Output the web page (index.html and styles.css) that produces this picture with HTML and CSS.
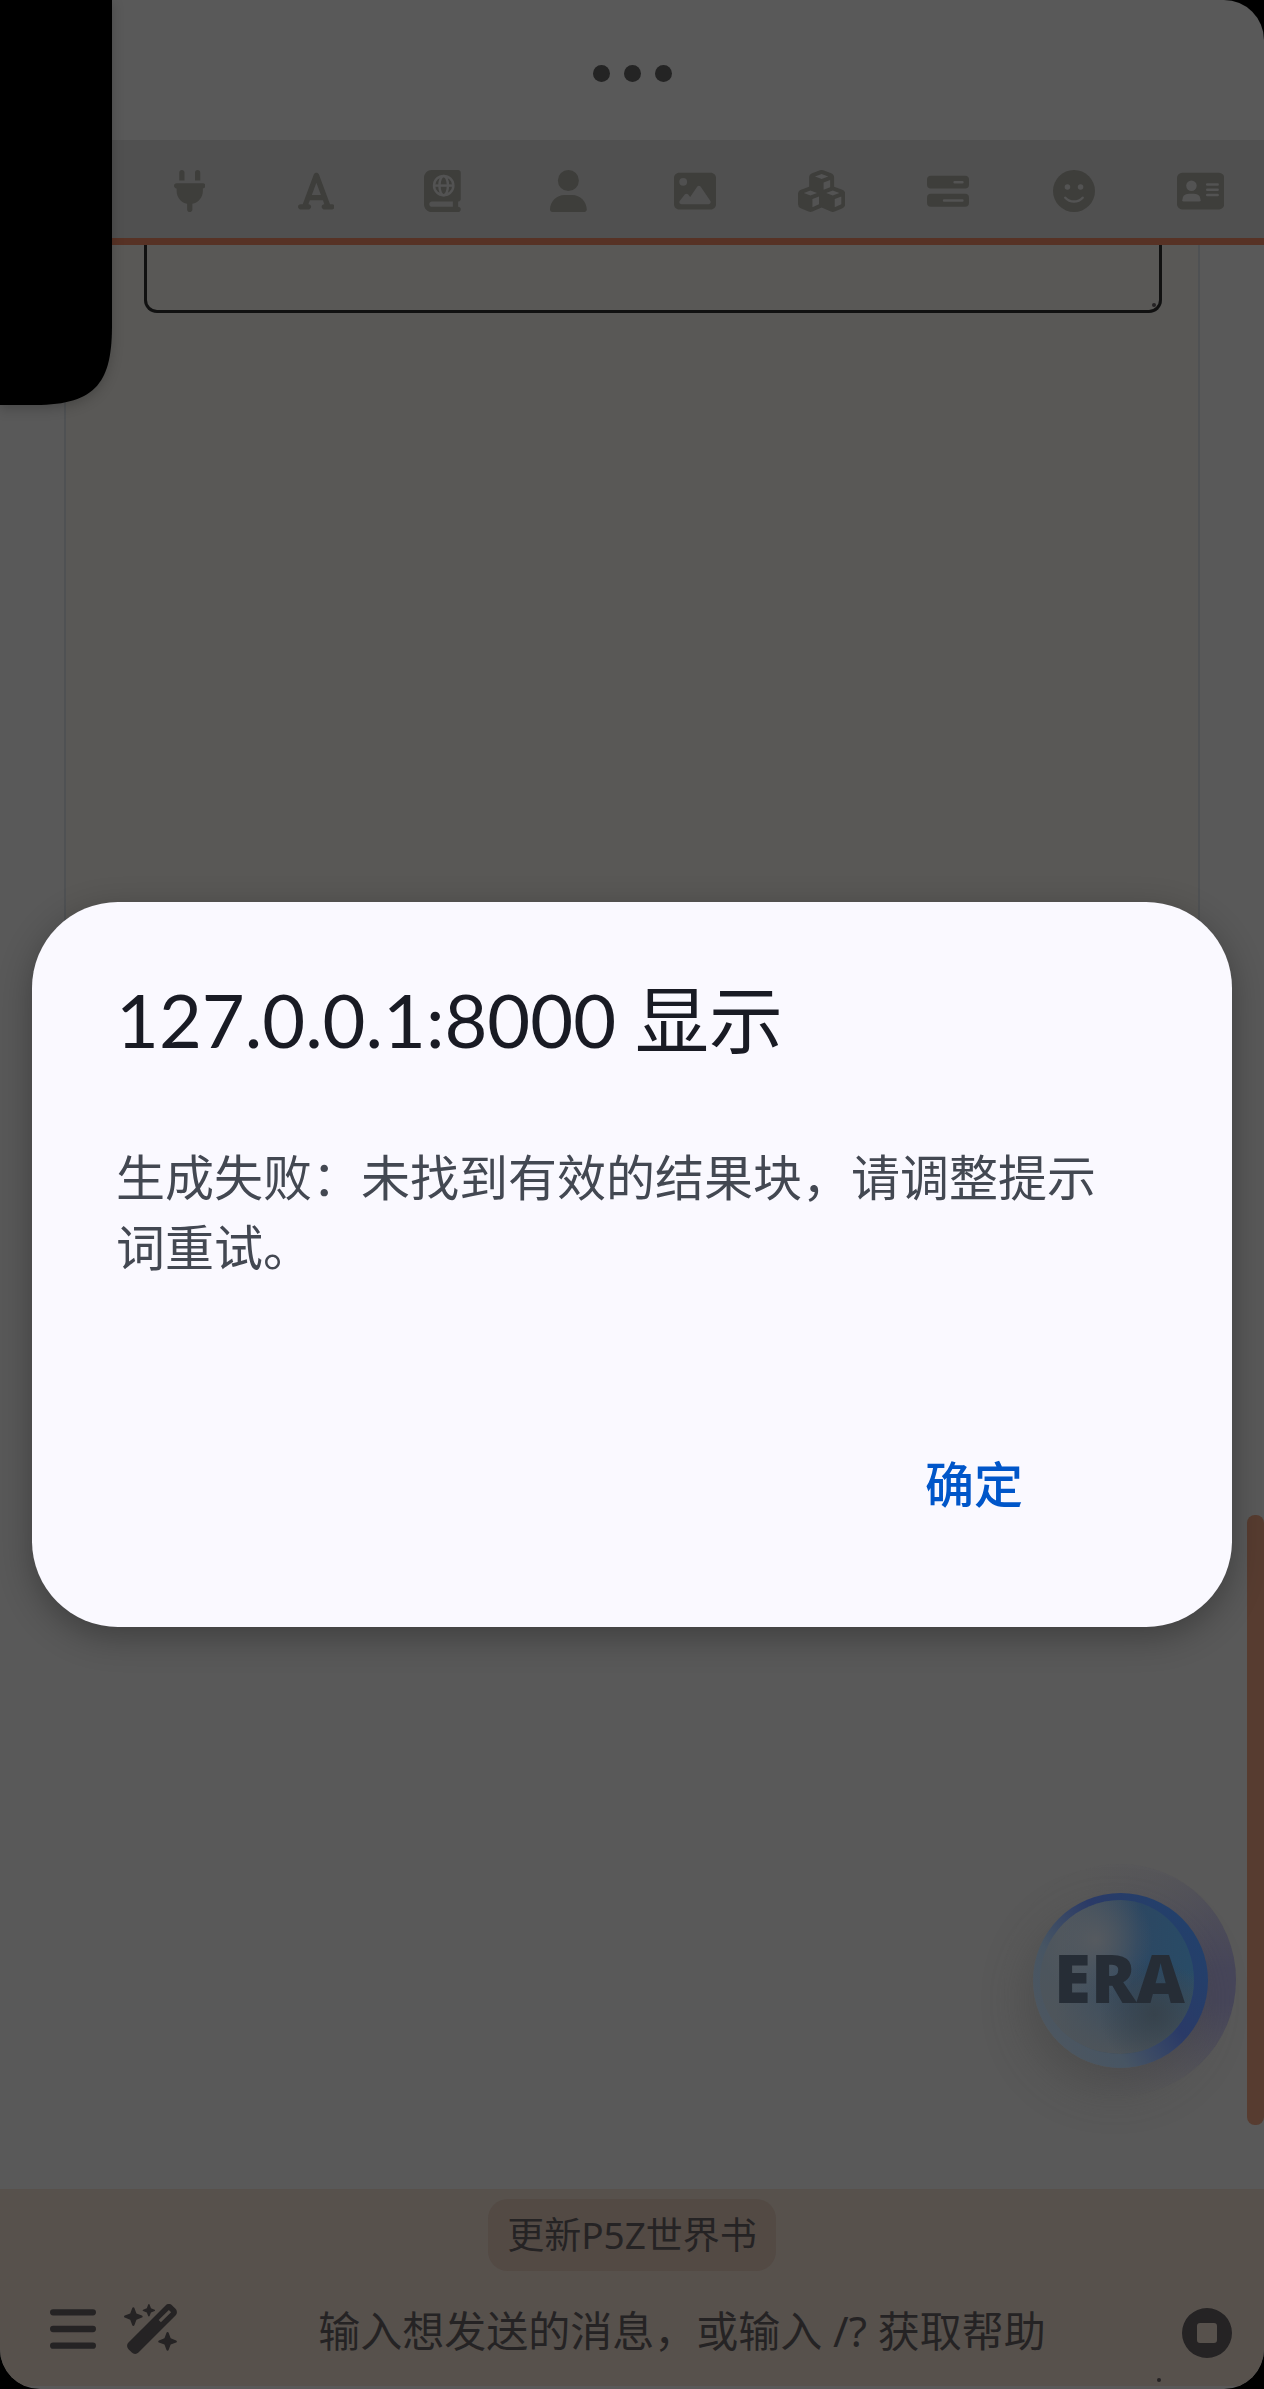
FILE: index.html
```html
<!DOCTYPE html>
<html lang="zh-CN">
<head>
  <meta charset="UTF-8" />
  <meta name="viewport" content="width=device-width, initial-scale=1.0" />
  <title>127.0.0.1:8000</title>
  <link rel="stylesheet" href="styles.css">
</head>
<body>
  <div class="screen">
    <header class="window-bar">
      <span class="dot"></span>
      <span class="dot"></span>
      <span class="dot"></span>
    </header>

    <nav class="top-bar">
      <button type="button" aria-label="AI 设置"></button>
      <button type="button" aria-label="API 连接">
        <svg viewBox="0 0 384 512"><path d="M96 0C78.300 0 64 14.300 64 32v96h64V32c0-17.700-14.300-32-32-32zM288 0c-17.700 0-32 14.300-32 32v96h64V32c0-17.700-14.300-32-32-32zM32 160c-17.700 0-32 14.300-32 32s14.300 32 32 32v32c0 77.400 55 142 128 156.800V480c0 17.700 14.300 32 32 32s32-14.300 32-32V412.800C297 398 352 333.400 352 256V224c17.700 0 32-14.300 32-32s-14.300-32-32-32H32z"/></svg>
      </button>
      <button type="button" aria-label="格式">
        <svg viewBox="0 0 448 512"><path d="M254 52.800C249.300 40.300 237.300 32 224 32s-25.300 8.300-30 20.800L57.800 416H32c-17.700 0-32 14.300-32 32s14.300 32 32 32h96c17.700 0 32-14.300 32-32s-14.300-32-32-32h-1.800l18-48H303.800l18 48H320c-17.700 0-32 14.300-32 32s14.300 32 32 32h96c17.700 0 32-14.300 32-32s-14.300-32-32-32H390.200L254 52.800zM279.800 304H168.200L224 155.100 279.800 304z"/></svg>
      </button>
      <button type="button" aria-label="世界书">
        <svg viewBox="0 0 448 512">
          <path fill-rule="evenodd" d="M0 96C0 43 43 0 96 0H416c17.700 0 32 14.300 32 32V352c0 17.700-14.300 32-32 32v64c17.700 0 32 14.300 32 32s-14.300 32-32 32H96c-53 0-96-43-96-96V96zM64 416c0 17.700 14.300 32 32 32H352V384H96c-17.700 0-32 14.300-32 32z"/>
          <g class="cut-line"><circle cx="240" cy="190" r="118"/><ellipse cx="240" cy="190" rx="52" ry="118"/><path d="M122 190H358"/></g>
        </svg>
      </button>
      <button type="button" aria-label="用户">
        <svg viewBox="0 0 448 512"><path d="M224 256A128 128 0 1 0 224 0a128 128 0 1 0 0 256zm-45.700 48C79.800 304 0 383.800 0 482.300C0 498.700 13.300 512 29.700 512H418.300c16.400 0 29.700-13.300 29.700-29.700C448 383.800 368.200 304 269.700 304H178.300z"/></svg>
      </button>
      <button type="button" aria-label="背景">
        <svg viewBox="0 0 512 512"><path fill-rule="evenodd" d="M0 96C0 60.700 28.700 32 64 32H448c35.300 0 64 28.700 64 64V416c0 35.300-28.700 64-64 64H64c-35.300 0-64-28.700-64-64V96zM323.800 202.500c-4.500-6.600-11.900-10.500-19.800-10.500s-15.400 3.900-19.800 10.500l-87 127.600L170.700 297c-4.600-5.700-11.500-9-18.700-9s-14.200 3.300-18.700 9l-64 80c-5.800 7.200-6.900 17.100-2.900 25.400s12.400 13.600 21.600 13.600H424c8.900 0 17.100-4.900 21.200-12.800s3.600-17.400-1.400-24.700l-120-176zM112 192a48 48 0 1 0 0-96 48 48 0 1 0 0 96z"/></svg>
      </button>
      <button type="button" aria-label="扩展">
        <svg viewBox="0 0 576 512">
          <path d="M268 4q20-8 40 0l96 36q36 14 36 52v113l100 37q36 14 36 53v119q0 36-33 51l-96 42q-23 10-46 0L288 457 175 507q-23 10-46 0l-96-42Q0 450 0 414V295q0-39 36-53l100-37V92q0-38 36-52z"/>
          <path class="cut" d="M288 48l81 30-81 32-81-32zM152 250l81 30-81 32-81-32zM424 250l81 30-81 32-81-32zM312 152l80-31v90l-80 30zM176 355l80-32v96l-80 36zM448 355l80-32v96l-80 36z"/>
        </svg>
      </button>
      <button type="button" aria-label="预设">
        <svg viewBox="0 0 512 512">
          <rect y="69" width="512" height="156" rx="48"/><rect y="291" width="512" height="156" rx="48"/>
          <path class="cut-line" stroke-linecap="round" d="M336 150H432M208 371H432"/>
        </svg>
      </button>
      <button type="button" aria-label="表情">
        <svg viewBox="0 0 512 512">
          <circle cx="256" cy="256" r="256"/>
          <g class="cut"><circle cx="176" cy="208" r="34"/><circle cx="336" cy="208" r="34"/></g>
          <path class="cut-line" stroke-linecap="round" d="M150 338q42 46 106 46t106-46"/>
        </svg>
      </button>
      <button type="button" aria-label="角色">
        <svg viewBox="0 0 576 512">
          <rect y="32" width="576" height="448" rx="64"/>
          <g class="cut"><circle cx="176" cy="192" r="64"/><path d="M64 368q0-80 80-80h64q80 0 80 80 0 16-16 16H80q-16 0-16-16z"/></g>
          <path class="cut-line" stroke-linecap="round" d="M368 176H496M368 240H496M368 304H496"/>
        </svg>
      </button>
    </nav>

    <main class="chat">
      <div class="card">
        <div class="card-field">
          <textarea class="card-text" aria-label="提示词"></textarea>
          <span class="grip"></span>
        </div>
      </div>
    </main>

    <form class="send-form">
      <button type="button" class="quick-reply">更新P5Z世界书</button>
      <div class="send-row">
        <div class="left-tools">
          <button type="button" class="menu" aria-label="菜单">
            <svg viewBox="0 0 44 42"><path class="menu-lines" d="M3 5H41M3 21H41M3 37H41"/></svg>
          </button>
          <button type="button" class="wand" aria-label="扩展工具">
            <svg viewBox="0 0 576 512">
              <path d="M234.700 42.700L197 56.800c-3 1.100-5 4-5 7.200s2 6.100 5 7.200l37.700 14.100L248.800 123c1.100 3 4 5 7.200 5s6.100-2 7.200-5l14.100-37.700L315 71.200c3-1.100 5-4 5-7.200s-2-6.100-5-7.200L277.300 42.700 263.200 5c-1.100-3-4-5-7.200-5s-6.100 2-7.200 5L234.700 42.700zM46.100 395.400c-18.700 18.700-18.700 49.100 0 67.900l34.600 34.600c18.700 18.700 49.100 18.700 67.900 0L529.900 116.500c18.700-18.700 18.700-49.100 0-67.900L495.300 14.100c-18.700-18.700-49.100-18.700-67.900 0L46.100 395.400zM484.600 82.600l-105 105-23.300-23.300 105-105 23.300 23.300zM7.500 117.200C3 118.900 0 123.200 0 128s3 9.100 7.500 10.800L64 160l21.200 56.500c1.700 4.500 6 7.500 10.800 7.500s9.100-3 10.800-7.500L128 160l56.500-21.200c4.500-1.700 7.500-6 7.500-10.800s-3-9.100-7.500-10.800L128 96 106.800 39.500C105.100 35 100.800 32 96 32s-9.100 3-10.800 7.500L64 96 7.500 117.200zm352 256c-4.500 1.700-7.500 6-7.500 10.800s3 9.100 7.500 10.800L416 416l21.200 56.500c1.700 4.500 6 7.500 10.800 7.500s9.100-3 10.800-7.500L480 416l56.500-21.200c4.500-1.700 7.500-6 7.500-10.800s-3-9.100-7.500-10.800L480 352l-21.200-56.500c-1.700-4.500-6-7.500-10.800-7.500s-9.100 3-10.800 7.500L416 352l-56.500 21.200z"/>
            </svg>
          </button>
        </div>
        <div class="message-box">
          <textarea class="message" rows="1" aria-label="消息" placeholder="输入想发送的消息，或输入 /? 获取帮助"></textarea>
          <span class="grip"></span>
        </div>
        <button type="button" class="stop" aria-label="停止">
          <svg viewBox="0 0 50 50"><path fill-rule="evenodd" d="M25 0a25 25 0 1 0 0 50 25 25 0 1 0 0-50zM18 15H32q3 0 3 3V32q0 3-3 3H18q-3 0-3-3V18q0-3 3-3z"/></svg>
        </button>
      </div>
    </form>
  </div>

  <div class="scroll-thumb"></div>
  <div class="era-halo">
    <button type="button" class="era-ball">ERA</button>
  </div>
  <svg class="camera-cutout" viewBox="0 0 112 405"><path d="M0 0H112V325C112 380 98 405 35 405H0z"/></svg>

  <div class="overlay">
    <div class="alert" role="alertdialog" aria-labelledby="alertTitle" aria-describedby="alertText">
      <h1 id="alertTitle">127.0.0.1:8000 显示</h1>
      <p id="alertText">生成失败：未找到有效的结果块，请调整提示词重试。</p>
      <div class="alert-actions">
        <button type="button">确定</button>
      </div>
    </div>
  </div>
</body>
</html>
```

FILE: styles.css
```css
* {
  box-sizing: border-box;
}
body {
  margin: 0;
  background: #000;
  font-family: "Noto Sans", "Noto Sans CJK SC", sans-serif;
}
button {
  padding: 0;
  border: none;
  background: none;
  color: inherit;
  font: inherit;
  cursor: pointer;
}
textarea {
  display: block;
  resize: none;
  background: transparent;
  font: inherit;
}
svg {
  display: block;
  fill: currentColor;
}
.screen {
  display: flex;
  flex-direction: column;
  min-height: 100vh;
  padding-bottom: 3px;
  border-radius: 40px;
  overflow: hidden;
  background: #595959;
}

/* header */
.window-bar {
  display: flex;
  justify-content: center;
  gap: 14px;
  height: 140px;
  padding-top: 65px;
}
.dot {
  width: 17px;
  height: 17px;
  border-radius: 50%;
  background: #242424;
}
.top-bar {
  display: flex;
  height: 105px;
  padding-top: 3px;
  background: #505050;
  border-bottom: 7px solid #573225;
  color: #3e3e3b;
}
.top-bar button {
  flex: 1;
  display: flex;
  justify-content: center;
  align-items: center;
}
.top-bar svg {
  height: 42px;
}
.cut {
  fill: #535353;
}
.cut-line {
  fill: none;
  stroke: #535353;
  stroke-width: 30px;
}

/* chat */
.chat {
  flex: 1;
  padding: 0 64px;
}
.card {
  height: 1040px;
  padding: 0 36px 0 78px;
  border: 2px solid #4f5153;
  border-top: none;
  background: #595856;
}
.card-field {
  position: relative;
}
.card-text {
  width: 100%;
  height: 68px;
  border: 3px solid #111;
  border-top: none;
  border-radius: 0 0 13px 13px;
}
.grip {
  position: absolute;
  right: 6px;
  bottom: 6px;
  width: 4px;
  height: 4px;
  border-radius: 50%;
  background: #252324;
}

/* send form */
.send-form {
  display: flex;
  flex-direction: column;
  align-items: center;
  gap: 28px;
  padding: 10px 0 19px;
  background: #57514c;
  color: #252324;
}
.quick-reply {
  padding: 10px 19px;
  border-radius: 20px;
  background: #534a44;
  font-size: 37px;
  line-height: 52px;
}
.send-row {
  display: flex;
  align-items: center;
  width: 100%;
  padding: 0 32px 0 50px;
}
.left-tools {
  display: flex;
  align-items: center;
  gap: 28px;
  padding-bottom: 8px;
}
.menu svg {
  width: 46px;
  height: 44px;
}
.menu-lines {
  stroke: currentColor;
  stroke-width: 6px;
  stroke-linecap: round;
}
.wand svg {
  width: 56px;
  height: 50px;
}
.stop svg {
  width: 50px;
  height: 50px;
}
.message-box {
  position: relative;
  flex: 1;
  padding: 0 22px 0 24px;
}
.message-box .grip {
  right: 21px;
  bottom: -15px;
}
.message {
  width: 100%;
  height: 68px;
  padding: 0;
  border: none;
  font-size: 42px;
  line-height: 64px;
  text-align: center;
  overflow: hidden;
}
.message::placeholder {
  color: #252324;
  opacity: 1;
}

/* things floating over the page */
.scroll-thumb {
  position: fixed;
  top: 1515px;
  right: 0;
  width: 17px;
  height: 610px;
  border-radius: 8px;
  background: #573c30;
}
.era-halo {
  position: fixed;
  right: 28px;
  bottom: 293px;
  display: flex;
  justify-content: center;
  align-items: center;
  width: 232px;
  height: 232px;
  border-radius: 50%;
  background:
    linear-gradient(rgba(89, 89, 89, 0.8), rgba(89, 89, 89, 0) 45%, rgba(89, 89, 89, 0) 60%, rgba(89, 89, 89, 0.9)),
    linear-gradient(90deg, #595959 35%, #47465a 90%);
}
/* the border is the blue rim, the padding box is the glass inside it */
.era-ball {
  width: 175px;
  height: 175px;
  padding-left: 6px;
  border: solid transparent;
  border-width: 7px 14px 14px 7px;
  border-radius: 50%;
  background:
    radial-gradient(circle at 36% 26%, rgba(88, 91, 95, 0.9) 0%, rgba(88, 91, 95, 0) 38%) padding-box,
    radial-gradient(circle at 74% 74%, rgba(54, 65, 74, 0.9) 0%, rgba(54, 65, 74, 0) 34%) padding-box,
    linear-gradient(rgba(80, 85, 89, 0) 45%, rgba(80, 85, 89, 0.9) 100%) padding-box,
    linear-gradient(95deg, #4c555d 15%, #2c4762 60%, #284c67 100%) padding-box,
    linear-gradient(235deg, #23406b 15%, #2a3a67 42%, #475563 68%, #50575e 100%) border-box;
  box-shadow: -6px 20px 44px rgba(60, 60, 60, 0.4);
  color: #262d36;
  font-size: 67px;
  font-weight: 900;
  line-height: 146px;
}
.camera-cutout {
  position: fixed;
  top: 0;
  left: 0;
  width: 112px;
  height: 405px;
  fill: #000;
  overflow: visible;
  filter: drop-shadow(0 4px 6px rgba(0, 0, 0, 0.2));
}

/* alert */
.overlay {
  position: fixed;
  inset: 140px 0 0;
  display: flex;
  align-items: center;
  padding: 0 32px;
}
.alert {
  flex: 1;
  padding: 72px 88px 110px 84px;
  border-radius: 86px;
  background: #faf9ff;
  box-shadow: 0 10px 34px rgba(0, 0, 0, 0.3);
}
.alert h1 {
  margin: 0;
  color: #191b24;
  font-family: Lato, "Noto Sans CJK SC", sans-serif;
  font-size: 74px;
  font-weight: 400;
  line-height: 92px;
}
.alert p {
  margin: 74px 0 0;
  color: #434852;
  font-family: "Noto Sans CJK SC", sans-serif;
  font-size: 49px;
  line-height: 70px;
}
.alert-actions {
  display: flex;
  justify-content: flex-end;
  margin-top: 167px;
  padding-right: 121px;
}
.alert-actions button {
  color: #0056c9;
  font-family: "Noto Sans CJK SC", sans-serif;
  font-size: 49px;
  font-weight: 500;
  line-height: 70px;
}
```
